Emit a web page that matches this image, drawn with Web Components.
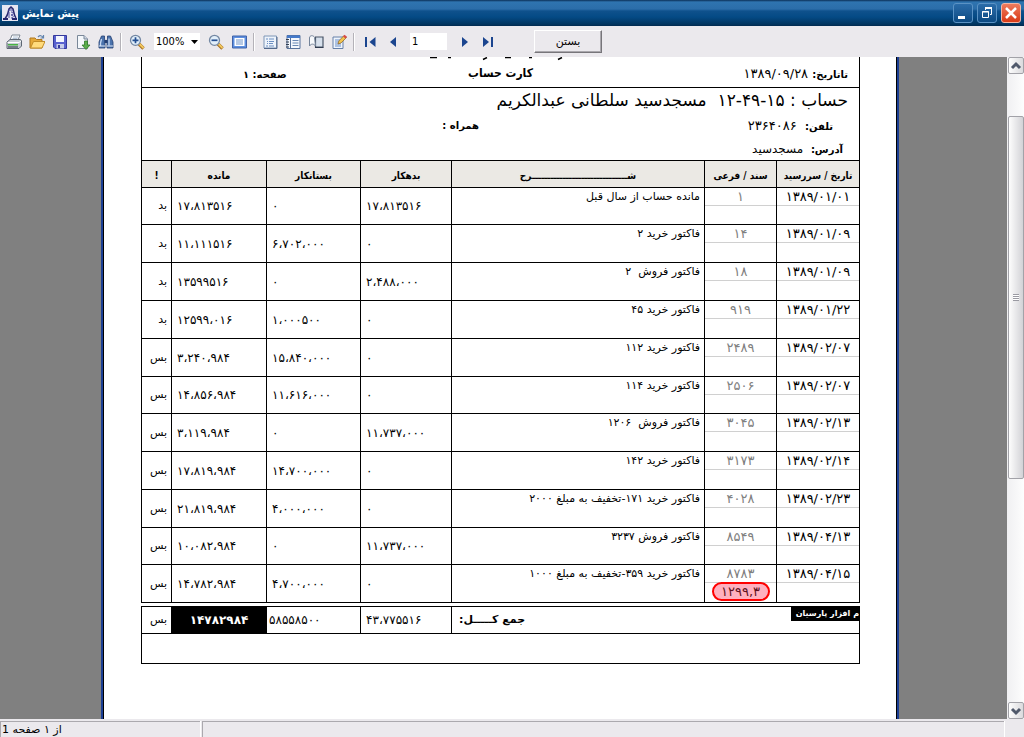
<!DOCTYPE html>
<html lang="fa">
<head>
<meta charset="utf-8">
<title>پیش نمایش</title>
<style>
  html, body { height: 100%; }
  body { margin: 0; font-family: "DejaVu Sans", sans-serif; font-size: 11px; color: #000; background: #ebe9ed; }
</style>
</head>
<body>
<preview-window></preview-window>
<script>
const define = (name, html, setup) => {
  const template = document.createElement('template');
  template.innerHTML = html;
  customElements.define(name, class extends HTMLElement {
    constructor() {
      super();
      this.attachShadow({ mode: 'open' }).append(template.content.cloneNode(true));
    }
    connectedCallback() { if (setup) setup(this, this.shadowRoot); }
  });
};

/* Toolbar glyphs, drawn on a 16 x 16 grid */
const ICONS = {
  print: '<path d="M4 6 6 1h8l-2 5z" fill="#fff" stroke="#7d8794"/><path d="M7 3h5M6.500 4.500h5" stroke="#9fb2cc" stroke-width=".8"/><path d="M1 8 4 5.500h10.500L15.500 7v5L13 14.500H1z" fill="#c9ced6" stroke="#5d6673"/><path d="M1.500 8.500h11.500l2-1.500" fill="none" stroke="#fff"/><path d="M2 10h10v1.500H2z" fill="#49b344"/><path d="M2 13h10" stroke="#59616c" stroke-width="1.500"/>',
  open: '<path d="M1 14V4h5l1.500 1.500H13V14z" fill="#e5a93a" stroke="#b0791d"/><path d="M1.500 14 4.500 7.500H16L13 14z" fill="#ffdb7d" stroke="#c28d28"/><path d="M9 3c2-2 4-1.500 5 .5M14.500 1v3h-3" fill="none" stroke="#6384ae" stroke-width="1.200"/>',
  save: '<path d="M1.500 1.500h13v13H3L1.500 13z" fill="#5a62cf" stroke="#34399c"/><path d="M4 2h8v6H4z" fill="#f4f6ff"/><path d="M4.500 10H12v4.500H4.500z" fill="#c8cdea"/><path d="M6 11h2v3H6z" fill="#34399c"/>',
  send: '<path d="M2.500 1.500H9L12.500 5v9.500h-10z" fill="#f4f7fb" stroke="#7a8798"/><path d="M9 1.500V5h3.500" fill="#cdd7e5" stroke="#7a8798"/><path d="M9.500 7h3v4H15l-4 4.500L7 11h2.500z" fill="#5aad4b" stroke="#2f7a2b" stroke-width=".8"/>',
  find: '<path d="M3.500 2h3v3l.5 2v7H1V8zM9.500 2h3L15 8v6H9V7l.5-2z" fill="#4b73ad" stroke="#243f72" stroke-width=".8"/><path d="M6.500 6h3v3h-3z" fill="#243f72"/><path d="M3.500 5 2.500 9v3M11 4.500v7" stroke="#c6d9f3" stroke-width="1.300" fill="none"/><path d="M1 12h6M9 12h6" stroke="#dfe9f8"/>',
  zoomin: '<path d="m10 10 4.500 4.500" stroke="#a66f22" stroke-width="3.400"/><path d="m10.500 10 4 4" stroke="#f3c95f" stroke-width="1.800"/><circle cx="6.500" cy="6.300" r="5" fill="#e2effa" stroke="#7488a3" stroke-width="1.300"/><path d="M3.500 6.300h6M6.500 3.300v6" stroke="#234e91" stroke-width="1.700"/>',
  zoomout: '<path d="m10 10 4.500 4.500" stroke="#a66f22" stroke-width="3.400"/><path d="m10.500 10 4 4" stroke="#f3c95f" stroke-width="1.800"/><circle cx="6.500" cy="6.300" r="5" fill="#e2effa" stroke="#7488a3" stroke-width="1.300"/><path d="M3.500 6.300h6" stroke="#234e91" stroke-width="1.700"/>',
  screen: '<path d="M1.500 2h14v12h-14z" fill="#5d8fe0" stroke="#3f62a8"/><path d="M3.500 4h10v8h-10z" fill="#fff"/><path d="M5 6h7M5 8h7M5 10h7" stroke="#6f93c8"/>',
  outline: '<path d="M2 2h12.500v12H2z" fill="#edf3fb" stroke="#7f96b6"/><path d="M2 14.500h13V3" fill="none" stroke="#53688b"/><path d="M4 5h2M7 5h5M5 7.500h1M7 7.500h5M5 9.500h1M7 9.500h4M4 12h2M7 12h5" stroke="#6c8fc2"/>',
  thumbs: '<path d="M2 1.500h13v13H2z" fill="#f5f8fd" stroke="#58739c"/><path d="M2 1.500h13v2.500H2z" fill="#4479ca"/><path d="M5.500 4v10.500" stroke="#58739c"/><path d="M1 5.500h3M1 8h3M1 10.500h3M1 13h3" stroke="#333f52"/><path d="M7.500 6.500h6M7.500 9h6M7.500 11.500h6" stroke="#6b89b4"/>',
  pages: '<path d="M7.500 3h7.500v10H7.500z" fill="#d7e0ec" stroke="#4a5668" stroke-width="1.200"/><path d="M1.500 12V4c0-3 4-3 5-.5L7.500 12C6 9.500 3 9.500 1.500 12z" fill="#f7f9fc" stroke="#75849a"/><path d="M7 13.500h8.500" stroke="#303c50"/>',
  edit: '<path d="M2 3h10v11.500H2z" fill="#eef4fc" stroke="#6680a8"/><path d="M4 6h5M4 8h4M4 10h6M4 12h6" stroke="#6b8fc9"/><path d="m7 10 .8-3L13 1.500 15.500 3.500 10 9z" fill="#f2c44f" stroke="#8b6222" stroke-width=".7"/><path d="m12 2.500 1.500-1.800L16 2.800 14.500 4.500z" fill="#d84a4a"/>',
  first: '<path d="M4 3v10" stroke="#1b458f" stroke-width="2"/><path d="M13.500 3v10L7.500 8z" fill="#1b458f"/>',
  prev: '<path d="M11 3v10L5 8z" fill="#1b458f"/>',
  next: '<path d="M5 3v10l6-5z" fill="#1b458f"/>',
  last: '<path d="M3 3v10l6-5z" fill="#1b458f"/><path d="M12 3v10" stroke="#1b458f" stroke-width="2"/>'
};

define('tool-button', `
<style>
  :host { display: block; flex: none; }
  button { display: block; padding: 3px 2px 3px 3px; border: 1px solid transparent; background: none; }
  button:hover { border-color: #98b5e2; background: #dce6f4; }
  svg { display: block; width: 16px; height: 16px; }
</style>
<button type="button"><svg viewBox="0 0 16 16" fill="none" aria-hidden="true"></svg></button>`,
(host, root) => {
  root.querySelector('svg').innerHTML = ICONS[host.getAttribute('icon')];
  root.querySelector('button').setAttribute('aria-label', host.getAttribute('label'));
});

define('title-bar', `
<style>
  :host { display: flex; align-items: center; height: 26px; box-sizing: border-box; padding: 0 3px 0 2px; gap: 4px;
    background: linear-gradient(#0b2f57 0, #2f74b0 2px, #2b6da9 9px, #0f518c 11px, #044a85 17px, #013560 24px, #012a50 26px); color: #fff; }
  h1 { flex: 1; margin: 0; font-size: 11px; font-family: "DejaVu Sans Condensed", "DejaVu Sans", sans-serif; font-weight: bold; direction: rtl; text-align: left; }
  .logo { width: 16px; height: 16px; }
  button { width: 20px; height: 20px; padding: 0; border: 1px solid #5a92c4; border-radius: 3px; background: linear-gradient(#2b6ca9, #0c4a83); }
  button.close { border-color: #f2b5a4; background: linear-gradient(#ee7b5e, #d93a16); }
  button svg { display: block; width: 18px; height: 18px; fill: none; stroke: #fff; }
</style>
<svg class="logo" viewBox="0 0 16 16" fill="none" aria-hidden="true"><path d="M0 0h16v16H0z" fill="#e6e6f2"/><path d="M3 13c3-2 3-6 4-9l2-2 2 2c1 3 1 7 3 9" stroke="#26266e" stroke-width="1.500"/><path d="M1 14h5M10 14h5" stroke="#26266e" stroke-width="2"/><path d="M6 5h5M7 7v6M9 7c3 0 3 3 0 3 3 0 3 3 0 3" stroke="#4a4a9c"/></svg>
<h1><slot></slot></h1>
<button type="button" aria-label="کوچک کردن"><svg viewBox="0 0 18 18"><path d="M4 13.500h7" stroke-width="3"/></svg></button>
<button type="button" aria-label="بازگرداندن"><svg viewBox="0 0 18 18"><path d="M7.500 6V4.500h6v6H12"/><path d="M7 4h7" stroke-width="2"/><path d="M4.500 7.500h6v6h-6zM4 8h7"/></svg></button>
<button type="button" class="close" aria-label="بستن پنجره"><svg viewBox="0 0 18 18"><path d="m4 4 10 10M14 4 4 14" stroke-width="2.500"/></svg></button>`);

define('tool-bar', `
<style>
  :host { display: flex; align-items: center; height: 31px; box-sizing: border-box; padding: 0 2px; background: #ebe9ed; }
  i { flex: none; width: 1px; height: 18px; margin: 0 3px; background: #b4b2b8; border-right: 1px solid #fff; }
  select, input { box-sizing: border-box; height: 17px; margin: 0; border: 0; padding: 0 2px; border-radius: 0; background-color: #fff; font: 11px/17px "DejaVu Sans Condensed", "DejaVu Sans", sans-serif; color: #000; }
  .zoom { display: flex; position: relative; width: 46px; margin: 0 4px 0 6px; background: #fff; }
  .zoom select { appearance: none; width: 46px; }
  .zoom svg { position: absolute; right: 2px; top: 7px; width: 7px; height: 4px; pointer-events: none; }
  input { width: 37px; margin: 0 6px; }
  .close { box-sizing: border-box; width: 68px; height: 23px; margin-left: 35px; padding: 0; border: 1px solid; border-color: #fff #77757a #77757a #fff; box-shadow: inset -1px -1px #aaa8ad; background: #ebe9ed; font: 11px "DejaVu Sans", sans-serif; color: #000; }
</style>
<tool-button icon="print" label="چاپ"></tool-button>
<tool-button icon="open" label="باز کردن"></tool-button>
<tool-button icon="save" label="ذخیره"></tool-button>
<tool-button icon="send" label="ارسال"></tool-button>
<tool-button icon="find" label="جستجو"></tool-button>
<i></i>
<tool-button icon="zoomin" label="بزرگنمایی"></tool-button>
<span class="zoom"><select aria-label="اندازه"><option>100%</option><option>75%</option><option>50%</option></select><svg viewBox="0 0 7 4" aria-hidden="true"><path d="M0 0h7L3.500 4z"/></svg></span>
<tool-button icon="zoomout" label="کوچکنمایی"></tool-button>
<tool-button icon="screen" label="تمام صفحه"></tool-button>
<i></i>
<tool-button icon="outline" label="فهرست"></tool-button>
<tool-button icon="thumbs" label="صفحات کوچک"></tool-button>
<tool-button icon="pages" label="حاشیه صفحه"></tool-button>
<tool-button icon="edit" label="ویرایش"></tool-button>
<i></i>
<tool-button icon="first" label="اولین صفحه"></tool-button>
<tool-button icon="prev" label="صفحه قبل"></tool-button>
<input type="text" value="1" aria-label="شماره صفحه">
<tool-button icon="next" label="صفحه بعد"></tool-button>
<tool-button icon="last" label="آخرین صفحه"></tool-button>
<button type="button" class="close">بستن</button>`);

define('report-head', `
<style>
  :host { display: block; direction: rtl; border: solid #000; border-width: 0 1px; font-size: 13px; }
  header { display: grid; grid-template-columns: 1fr auto 1fr; align-items: center; height: 31px; box-sizing: border-box; padding-top: 2px; border-bottom: 1px solid #000; position: relative; }
  h2 { margin: 0; font-size: 12px; font-family: "DejaVu Sans Condensed", "DejaVu Sans", sans-serif; }
  .until { padding-right: 11px; }
  .sheet { justify-self: end; padding-left: 101px; }
  b { font-size: 10px; }
  .cut { position: absolute; top: 0; left: 286px; width: 136px; height: 4px; }
  .body { height: 72px; padding-right: 11px; display: grid; grid-template-rows: 24px 26px 22px; align-items: center; white-space: pre; }
  .account { font-size: 17px; line-height: 20px; }
  .phone { display: grid; grid-template-columns: 354px auto; justify-content: start; align-items: center; padding-right: 15px; }
  .address { padding-right: 5px; font-size: 12px; }
</style>
<header>
  <svg class="cut" viewBox="0 0 136 4" fill="none" stroke="#000" aria-hidden="true"><path d="M2 .5h7M20 .5h3" stroke-width="1.500"/><path d="M55 2.500l4-2M77 .5h6M101 .5h3M130 2.500l4-2" stroke-width="1.500"/></svg>
  <span class="until"><b>تاتاریخ:</b> ۱۳۸۹/۰۹/۲۸</span>
  <h2>کارت حساب</h2>
  <span class="sheet"><b>صفحه: ۱</b></span>
</header>
<div class="body">
  <div class="account">حساب : ۱۵-۴۹-۱۲  مسجدسید سلطانی عبدالکریم</div>
  <div class="phone"><span><b>تلفن:</b>  ۲۳۶۴۰۸۶</span><b>همراه :</b></div>
  <div class="address"><b>آدرس:</b>  مسجدسید</div>
</div>`);

const ENTRIES = [
  ['۱۳۸۹/۰۱/۰۱', '۱', 'مانده حساب از سال قبل', '۱۷،۸۱۳۵۱۶', '۰', '۱۷،۸۱۳۵۱۶', 'بد'],
  ['۱۳۸۹/۰۱/۰۹', '۱۴', 'فاکتور خرید ۲', '۰', '۶،۷۰۲،۰۰۰', '۱۱،۱۱۱۵۱۶', 'بد'],
  ['۱۳۸۹/۰۱/۰۹', '۱۸', 'فاکتور فروش  ۲', '۲،۴۸۸،۰۰۰', '۰', '۱۳۵۹۹۵۱۶', 'بد'],
  ['۱۳۸۹/۰۱/۲۲', '۹۱۹', 'فاکتور خرید ۴۵', '۰', '۱،۰۰۰۵۰۰', '۱۲۵۹۹،۰۱۶', 'بد'],
  ['۱۳۸۹/۰۲/۰۷', '۲۴۸۹', 'فاکتور خرید ۱۱۲', '۰', '۱۵،۸۴۰،۰۰۰', '۳،۲۴۰،۹۸۴', 'بس'],
  ['۱۳۸۹/۰۲/۰۷', '۲۵۰۶', 'فاکتور خرید ۱۱۴', '۰', '۱۱،۶۱۶،۰۰۰', '۱۴،۸۵۶،۹۸۴', 'بس'],
  ['۱۳۸۹/۰۲/۱۳', '۳۰۴۵', 'فاکتور فروش  ۱۲۰۶', '۱۱،۷۳۷،۰۰۰', '۰', '۳،۱۱۹،۹۸۴', 'بس'],
  ['۱۳۸۹/۰۲/۱۴', '۳۱۷۳', 'فاکتور خرید ۱۴۲', '۰', '۱۴،۷۰۰،۰۰۰', '۱۷،۸۱۹،۹۸۴', 'بس'],
  ['۱۳۸۹/۰۲/۲۳', '۴۰۲۸', 'فاکتور خرید ۱۷۱-تخفیف به مبلغ ۲۰۰۰', '۰', '۴،۰۰۰،۰۰۰', '۲۱،۸۱۹،۹۸۴', 'بس'],
  ['۱۳۸۹/۰۴/۱۳', '۸۵۴۹', 'فاکتور فروش ۳۲۳۷', '۱۱،۷۳۷،۰۰۰', '۰', '۱۰،۰۸۲،۹۸۴', 'بس'],
  ['۱۳۸۹/۰۴/۱۵', '۸۷۸۳', 'فاکتور خرید ۳۵۹-تخفیف به مبلغ ۱۰۰۰', '۰', '۴،۷۰۰،۰۰۰', '۱۴،۷۸۲،۹۸۴', 'بس', '۱۲۹۹,۳']
];
const COLS = '<colgroup><col style="width:83px"><col style="width:72px"><col><col style="width:91px"><col style="width:94px"><col style="width:95px"><col style="width:30px"></colgroup>';

define('ledger-table', `
<style>
  :host { display: block; direction: rtl; }
  table { width: 100%; table-layout: fixed; border-collapse: separate; border-spacing: 0; border: solid #000; border-width: 0 1px 1px 0; box-sizing: border-box; }
  table + table { margin-top: 3px; }
  th, td { box-sizing: border-box; height: 38px; padding: 0; border: solid #000; border-width: 1px 0 0 1px; line-height: 16px; white-space: pre; font-weight: normal; }
  thead th { height: 27px; padding-top: 3px; background: #ebe9e4; font-size: 10px; font-family: "DejaVu Sans Condensed", "DejaVu Sans", sans-serif; font-weight: bold; }
  tbody tr:is(:nth-child(1), :nth-child(6), :nth-child(10)) td { height: 37px; }
  .date, .doc { vertical-align: top; text-align: center; font-size: 13px; }
  .date div, .doc div { box-sizing: border-box; height: 18px; padding-top: 1px; border-bottom: 1px solid #d0d0d0; }
  .doc { color: #808080; }
  .text { vertical-align: top; text-align: right; padding: 1px 4px 0 0; }
  .debit, .credit, .balance { text-align: left; padding-left: 5px; font-size: 12px; }
  .side { text-align: right; padding-right: 4px; }
  mark { display: block; box-sizing: border-box; width: 58px; height: 19px; margin: -1px auto 0; border: 2px solid #f00; border-radius: 10px; background: #ffb0bf; color: #601020; line-height: 16px; }
  tfoot td, tfoot th { height: 27px; font-size: 13px; }
  tfoot th { text-align: left; }
  tfoot .balance { background: #000; color: #fff; font-weight: bold; text-align: center; padding: 0; }
  tfoot .credit { padding-left: 2px; }
  tfoot .debit { font-size: 12px; }
  tfoot .side { font-size: 11px; }
  .sum { display: flex; justify-content: space-between; height: 26px; }
  .brand { width: 68px; height: 14px; overflow: hidden; background: #000; color: #fff; font-size: 8px; font-weight: bold; line-height: 13px; text-align: right; }
  .sum b { padding: 5px 0 0 7px; font-size: 11px; }
  .note td { height: 30px; }
</style>
<table aria-label="کارت حساب">${COLS}
  <thead><tr><th>تاریخ / سررسید</th><th>سند / فرعی</th><th>شـــــــــــــــــــــــــــــــرح</th><th>بدهکار</th><th>بستانکار</th><th>مانده</th><th>!</th></tr></thead>
  <tbody></tbody>
</table>
<table aria-label="جمع کل">${COLS}
  <tfoot>
    <tr><th colspan="3"><div class="sum"><span class="brand">م افزار پارسیان</span><b>جمع کـــــل:</b></div></th><td class="debit">۴۳،۷۷۵۵۱۶</td><td class="credit">۵۸۵۵۸۵۰۰</td><td class="balance">۱۴۷۸۲۹۸۴</td><td class="side">بس</td></tr>
    <tr class="note"><td colspan="7"></td></tr>
  </tfoot>
</table>`,
(host, root) => {
  const names = ['date', 'doc', 'text', 'debit', 'credit', 'balance', 'side'];
  root.querySelector('tbody').innerHTML = ENTRIES.map(row => '<tr>' + names.map((name, i) => {
    const value = i < 2 ? `<div>${row[i]}</div>` : row[i];
    const extra = i === 1 && row[7] ? `<mark>${row[7]}</mark>` : '';
    return `<td class="${name}">${value}${extra}</td>`;
  }).join('') + '</tr>').join('');
});

define('scroll-rail', `
<style>
  :host { display: flex; flex-direction: column; width: 17px; box-sizing: border-box; padding: 0 0 0 1px; background: linear-gradient(90deg, #f0f0f2, #fdfdfd); }
  button { flex: none; width: 16px; height: 17px; padding: 0; border: 1px solid #a2a2a8; border-radius: 2px; background: linear-gradient(90deg, #fdfdfd, #dadadd); }
  svg { display: block; width: 14px; height: 15px; fill: none; stroke: #50596b; stroke-width: 3; }
  .track { flex: 1; display: grid; grid-template-rows: 42fr 363fr 223fr; }
  .thumb { grid-row: 2; display: grid; place-items: center; border: 1px solid #a2a2a8; border-radius: 2px; background: linear-gradient(90deg, #fdfdfd, #d2d2d6); }
  .thumb span { width: 6px; height: 7px; background: repeating-linear-gradient(#9a9aa2 0 1px, #fff 1px 2px); }
</style>
<button type="button" aria-label="بالا"><svg viewBox="0 0 14 15"><path d="m3 10 4-4 4 4"/></svg></button>
<div class="track"><div class="thumb"><span></span></div></div>
<button type="button" aria-label="پایین"><svg viewBox="0 0 14 15"><path d="m3 6 4 4 4-4"/></svg></button>`);

define('status-bar', `
<style>
  :host { display: grid; grid-template-columns: 200px 1fr 18px; gap: 2px; height: 18px; box-sizing: border-box; padding-top: 2px; background: #ebe9ed; }
  div { border: solid #aba9ae; border-width: 1px 0 0 1px; box-shadow: 1px 0 #fff; direction: rtl; text-align: left; padding-left: 1px; line-height: 15px; }
</style>
<div><slot></slot></div><div></div>`);

define('preview-window', `
<style>
  :host { display: flex; flex-direction: column; height: 100vh; min-height: 0; overflow: hidden; }
  main { flex: 1; min-height: 0; display: flex; background: #808080; }
  .desk { flex: 1; min-width: 0; overflow: hidden; display: flex; padding: 0 108px 0 101px; }
  .paper { flex: 1; box-sizing: border-box; padding: 0 37px 0 38px; background: #fff; border: solid #1c3f94; border-width: 0 2px; box-shadow: inset 1px 0 #000, inset -1px 0 #000; }
</style>
<title-bar>پیش نمایش</title-bar>
<tool-bar></tool-bar>
<main>
  <div class="desk"><div class="paper"><report-head></report-head><ledger-table></ledger-table></div></div>
  <scroll-rail></scroll-rail>
</main>
<status-bar>از ۱ صفحه 1</status-bar>`);
</script>
</body>
</html>
